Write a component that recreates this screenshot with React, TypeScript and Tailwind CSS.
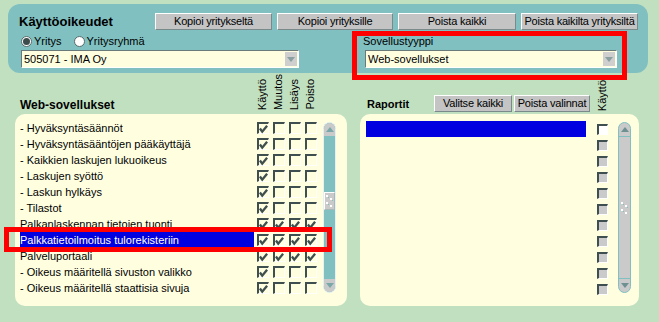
import type { ReactNode } from 'react'

type Row = { label: string; checks: boolean[]; selected?: boolean }

const leftRows: Row[] = [
  { label: '- Hyväksyntäsäännöt', checks: [true, false, false, false] },
  { label: '- Hyväksyntäsääntöjen pääkäyttäjä', checks: [true, false, false, false] },
  { label: '- Kaikkien laskujen lukuoikeus', checks: [true, false, false, false] },
  { label: '- Laskujen syöttö', checks: [true, false, false, false] },
  { label: '- Laskun hylkäys', checks: [true, false, false, false] },
  { label: '- Tilastot', checks: [true, false, false, false] },
  { label: 'Palkanlaskennan tietojen tuonti', checks: [true, true, true, true] },
  { label: 'Palkkatietoilmoitus tulorekisteriin', checks: [true, true, true, true], selected: true },
  { label: 'Palveluportaali', checks: [true, true, true, true] },
  { label: '- Oikeus määritellä sivuston valikko', checks: [true, false, false, false] },
  { label: '- Oikeus määritellä staattisia sivuja', checks: [true, false, false, false] },
]

const columns = ['Käyttö', 'Muutos', 'Lisäys', 'Poisto']

function Arrow({ up = false, color = '#6f9090' }: { up?: boolean; color?: string }) {
  return (
    <svg width="8" height="5" viewBox="0 0 8 5">
      <path d={up ? 'M0 5h8L4 0z' : 'M0 0h8L4 5z'} fill={color} />
    </svg>
  )
}

function Button({ children, width }: { children: ReactNode; width: string }) {
  return (
    <button
      type="button"
      className={`flex h-[17px] items-center justify-center overflow-visible border border-t-white border-l-white border-r-[#7a8a8a] border-b-[#7a8a8a] bg-[#c4c4c4] text-[11px] tracking-[-0.2px] whitespace-nowrap text-black ${width}`}
    >
      {children}
    </button>
  )
}

function Select({ value, width }: { value: string; width: string }) {
  return (
    <div
      className={`flex h-[18px] items-center border border-t-[#6a7a7a] border-l-[#6a7a7a] border-r-white border-b-white bg-[#ffffe0] pl-[2px] ${width}`}
    >
      <span className="flex-1 text-[11px]">{value}</span>
      <span className="mr-px flex h-[14px] w-[12px] items-center justify-center bg-[#cfcfcf]">
        <Arrow color="#8aa0a0" />
      </span>
    </div>
  )
}

function Radio({ checked }: { checked?: boolean }) {
  return (
    <span className="flex h-[11px] w-[11px] items-center justify-center rounded-full border border-[#5a6a6a] bg-white">
      {checked && <span className="h-[7px] w-[7px] rounded-full bg-[#3c4c4c]" />}
    </span>
  )
}

function CheckBox({ checked }: { checked: boolean }) {
  return (
    <span className="flex h-[12px] w-[12px] items-center justify-center border-t-2 border-l-2 border-r border-b border-t-[#3f4f4f] border-l-[#3f4f4f] border-r-white border-b-white">
      {checked && (
        <svg width="10" height="10" viewBox="0 0 10 10">
          <path d="M1 4.5L3.6 8L9 1.5" fill="none" stroke="#3f4f4f" strokeWidth="2.6" />
        </svg>
      )}
    </span>
  )
}

function Grip() {
  return (
    <svg width="9" height="14" viewBox="0 0 9 14">
      <rect x="1" y="1" width="2" height="2" fill="#ffffff" />
      <rect x="3" y="3" width="1" height="1" fill="#80c0c0" />
      <rect x="5" y="4" width="2" height="2" fill="#ffffff" />
      <rect x="7" y="6" width="1" height="1" fill="#80c0c0" />
      <rect x="1" y="8" width="2" height="2" fill="#ffffff" />
      <rect x="3" y="10" width="1" height="1" fill="#80c0c0" />
      <rect x="5" y="11" width="2" height="2" fill="#ffffff" />
    </svg>
  )
}

function TealScrollbar() {
  return (
    <div className="ml-[2px] mt-[8px] flex h-[171px] w-[13px] flex-col overflow-hidden rounded-[7px] border border-[#e4f2f2] bg-[#80c0c0]">
      <div className="flex h-[13px] items-center justify-center bg-[#cacaca]">
        <Arrow up color="#7aa8a8" />
      </div>
      <div className="flex-1">
        <div className="mt-[56px] flex h-[18px] items-center justify-center border border-t-white border-l-white border-r-[#a8b8b8] border-b-[#a8b8b8] bg-[#cacaca]">
          <Grip />
        </div>
      </div>
      <div className="flex h-[13px] items-center justify-center bg-[#cacaca]">
        <Arrow color="#7aa8a8" />
      </div>
    </div>
  )
}

function GrayScrollbar() {
  return (
    <div className="ml-[10px] mt-[8px] flex h-[171px] w-[13px] flex-col overflow-hidden rounded-[7px] border border-[#80c0c0] bg-[#cacaca]">
      <div className="flex h-[14px] items-center justify-center border-b border-[#80c0c0]">
        <Arrow up color="#6f9090" />
      </div>
      <div className="flex flex-1 items-center justify-center">
        <Grip />
      </div>
      <div className="flex h-[14px] items-center justify-center border-t border-[#80c0c0]">
        <Arrow color="#6f9090" />
      </div>
    </div>
  )
}

function VerticalLabel({ children }: { children: ReactNode }) {
  return (
    <span className="w-[11px] rotate-180 text-[11px] leading-[11px] whitespace-nowrap [writing-mode:vertical-rl]">
      {children}
    </span>
  )
}

export default function App() {
  return (
    <main className="relative min-h-screen overflow-hidden bg-[#c0e0c0] pt-[4px] font-['Liberation_Sans',Arial,sans-serif] text-[11px] leading-none text-black">
      <section className="ml-[8px] h-[69px] w-[640px] rounded-[12px] bg-[#80c0c0] pt-[9px]">
        <div className="flex h-[17px] items-center">
          <h1 className="w-[147px] pl-[11px] text-[13px] font-bold">Käyttöoikeudet</h1>
          <div className="flex gap-[5px]">
            <Button width="w-[117px]">Kopioi yritykseltä</Button>
            <Button width="w-[116px]">Kopioi yrityksille</Button>
            <Button width="w-[118px]">Poista kaikki</Button>
            <Button width="w-[117px]">Poista kaikilta yrityksiltä</Button>
          </div>
        </div>

        <div className="flex">
          <div className="ml-[13px] w-[278px]">
            <div className="mt-[4px] flex h-[14px] items-center">
              <Radio checked />
              <span className="ml-[2px] mr-[12px]">Yritys</span>
              <Radio />
              <span className="ml-[2px]">Yritysryhmä</span>
            </div>
            <div className="mt-[2px]">
              <Select value="505071 - IMA Oy" width="w-[278px]" />
            </div>
          </div>

          <div className="ml-[64px] w-[254px]">
            <div className="mt-[4px] flex h-[14px] items-center">Sovellustyyppi</div>
            <div className="mt-[2px] pl-[2px]">
              <Select value="Web-sovellukset" width="w-[252px]" />
            </div>
          </div>
        </div>
      </section>

      <div className="ml-[15px] flex gap-[13px]">
        <div className="w-[332px]">
          <div className="flex h-[41px] items-end">
            <div className="w-[242px] pb-[3px] pl-[5px] text-[12px] font-bold">Web-sovellukset</div>
            {columns.map((c) => (
              <div key={c} className="flex w-[16px] pb-[4px]">
                <VerticalLabel>{c}</VerticalLabel>
              </div>
            ))}
          </div>

          <div className="flex h-[192px] rounded-[10px] bg-[#ffffe0]">
            <div className="w-[306px] pt-[6px]">
              {leftRows.map((r) => (
                <div key={r.label} className="flex h-[16px] items-center">
                  <div
                    className={`ml-[5px] flex h-[16px] w-[234px] items-center whitespace-nowrap ${
                      r.selected ? 'bg-[#0000e0] text-white' : ''
                    }`}
                  >
                    {r.label}
                  </div>
                  <div className="ml-[3px] flex">
                    {r.checks.map((c, i) => (
                      <div key={i} className="w-[16px]">
                        <CheckBox checked={c} />
                      </div>
                    ))}
                  </div>
                </div>
              ))}
            </div>
            <TealScrollbar />
          </div>
        </div>

        <div className="w-[279px]">
          <div className="flex h-[41px] items-end">
            <div className="w-[74px] pb-[4px] pl-[7px] font-bold">Raportit</div>
            <div className="flex gap-[2px] pb-[2px]">
              <Button width="w-[78px]">Valitse kaikki</Button>
              <Button width="w-[76px]">Poista valinnat</Button>
            </div>
            <div className="ml-[7px] flex pb-[3px]">
              <VerticalLabel>Käyttö</VerticalLabel>
            </div>
          </div>

          <div className="flex h-[192px] rounded-[10px] bg-[#ffffe0]">
            <div className="w-[248px] pt-[7px]">
              {Array.from({ length: 11 }).map((_, i) => (
                <div key={i} className="flex h-[16px] items-center">
                  <div className={`ml-[6px] h-[16px] w-[220px] ${i === 0 ? 'bg-[#0000e0]' : ''}`} />
                  <span
                    className={`ml-[11px] h-[11px] w-[11px] border-t-2 border-l-2 border-r border-b border-t-[#3f4f4f] border-l-[#3f4f4f] border-r-white border-b-white ${
                      i === 0 ? 'bg-white' : 'bg-[#cacaca]'
                    }`}
                  />
                </div>
              ))}
            </div>
            <GrayScrollbar />
          </div>
        </div>
      </div>

      <div className="absolute left-[352px] top-[31px] h-[49px] w-[275px] border-[5px] border-[#ff0000]" />
      <div className="absolute left-[4px] top-[227px] h-[25px] w-[328px] border-[5px] border-[#ff0000]" />
    </main>
  )
}
